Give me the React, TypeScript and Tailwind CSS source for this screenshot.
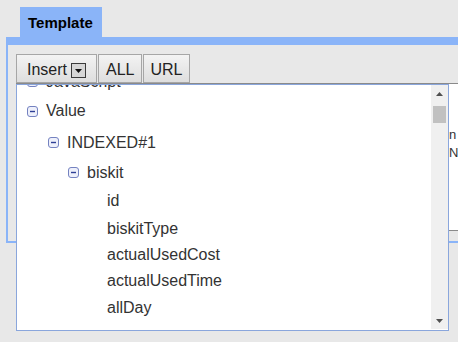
import React from 'react'

const ROWS = [
  { label: 'JavaScript',     node: true,  cls: 'h-[27px] pl-[10px]' },
  { label: 'Value',          node: true,  cls: 'h-[32px] pl-[10px]' },
  { label: 'INDEXED#1',      node: true,  cls: 'h-[31px] pl-[31px]' },
  { label: 'biskit',         node: true,  cls: 'h-[29px] pl-[51px]' },
  { label: 'id',             node: false, cls: 'h-[28px] pl-[90px]' },
  { label: 'biskitType',     node: false, cls: 'h-[27px] pl-[90px]' },
  { label: 'actualUsedCost', node: false, cls: 'h-[26px] pl-[90px]' },
  { label: 'actualUsedTime', node: false, cls: 'h-[26px] pl-[90px]' },
  { label: 'allDay',         node: false, cls: 'h-[27px] pl-[90px]' },
]

function MinusIcon() {
  return (
    <svg width="11" height="11" viewBox="0 0 11 11" className="shrink-0">
      <rect x="0.5" y="0.5" width="10" height="10" rx="2.5" fill="#eef0fb" stroke="#7482c0" />
      <path d="M3 5.5h5" stroke="#2e3f96" strokeWidth="1.4" />
    </svg>
  )
}

function Arrow({ up }: { up?: boolean }) {
  return (
    <svg width="7" height="4" viewBox="0 0 7 4">
      <path d={up ? 'M0 4L3.5 0L7 4Z' : 'M0 0L7 0L3.5 4Z'} fill="#505050" />
    </svg>
  )
}

const btn = 'flex items-start pt-[6px] h-[29px] border border-[#a6a6a6] bg-linear-to-b from-[#f3f3f3] to-[#dedede] text-[16px] leading-[18px] text-[#222]'

export default function App() {
  return (
    <div className="relative w-[458px] h-[342px] overflow-hidden bg-[#e8e8e8] font-['Liberation_Sans',Arial,sans-serif]">
      {/* Tab */}
      <div className="pl-[20px] pt-[7px]">
        <div className="flex items-center w-[82px] h-[30px] pl-[8px] pt-[2px] bg-[#8ab4f8] text-[15px] font-bold text-black">Template</div>
      </div>

      {/* Panel */}
      <div className="ml-[6px] w-[600px] h-[206px] border-t-[8px] border-l-2 border-b-2 border-[#8ab4f8] pl-[8px] pt-[9px]">
        <div className="flex gap-px h-[29px]">
          <div className={`${btn} px-[10px]`}>
            <span>Insert</span>
            <span className="ml-[4px] mt-[2px] flex items-center justify-center w-[15px] h-[15px] border border-[#3a3a3a] bg-[#d6d6d6]">
              <svg width="7" height="4" viewBox="0 0 7 4"><path d="M0 0L7 0L3.5 4Z" fill="#111" /></svg>
            </span>
          </div>
          <div className={`${btn} px-[7px]`}>ALL</div>
          <div className={`${btn} px-[6px]`}>URL</div>
        </div>

        {/* Text area behind the menu */}
        <div className="relative h-[148px] border border-[#8a8a8a] bg-white">
          <div className="pt-[42px] pl-[432px] text-[13px] leading-[18px] text-[#333]">
            <div>n</div>
            <div>N</div>
          </div>

          {/* Insert menu */}
          <div className="absolute left-[-1px] top-0 flex w-[433px] h-[247px] border border-[#8aa6dc] bg-white overflow-hidden">
            <div className="flex-1 overflow-hidden">
              <div className="mt-[-17px] text-[16px] text-[#333]">
                {ROWS.map((r) => (
                  <div key={r.label} className={`flex items-center gap-[8px] ${r.cls}`}>
                    {r.node && <MinusIcon />}
                    <span>{r.label}</span>
                  </div>
                ))}
              </div>
            </div>
            <div className="flex flex-col w-[17px] mb-[1px] bg-[#f0f0f0]">
              <div className="flex items-center justify-center h-[17px]"><Arrow up /></div>
              <div className="mt-[4px] mx-[2px] h-[17px] bg-[#c1c1c1]" />
              <div className="flex-1" />
              <div className="flex items-center justify-center h-[17px]"><Arrow /></div>
            </div>
          </div>
        </div>
      </div>
    </div>
  )
}
